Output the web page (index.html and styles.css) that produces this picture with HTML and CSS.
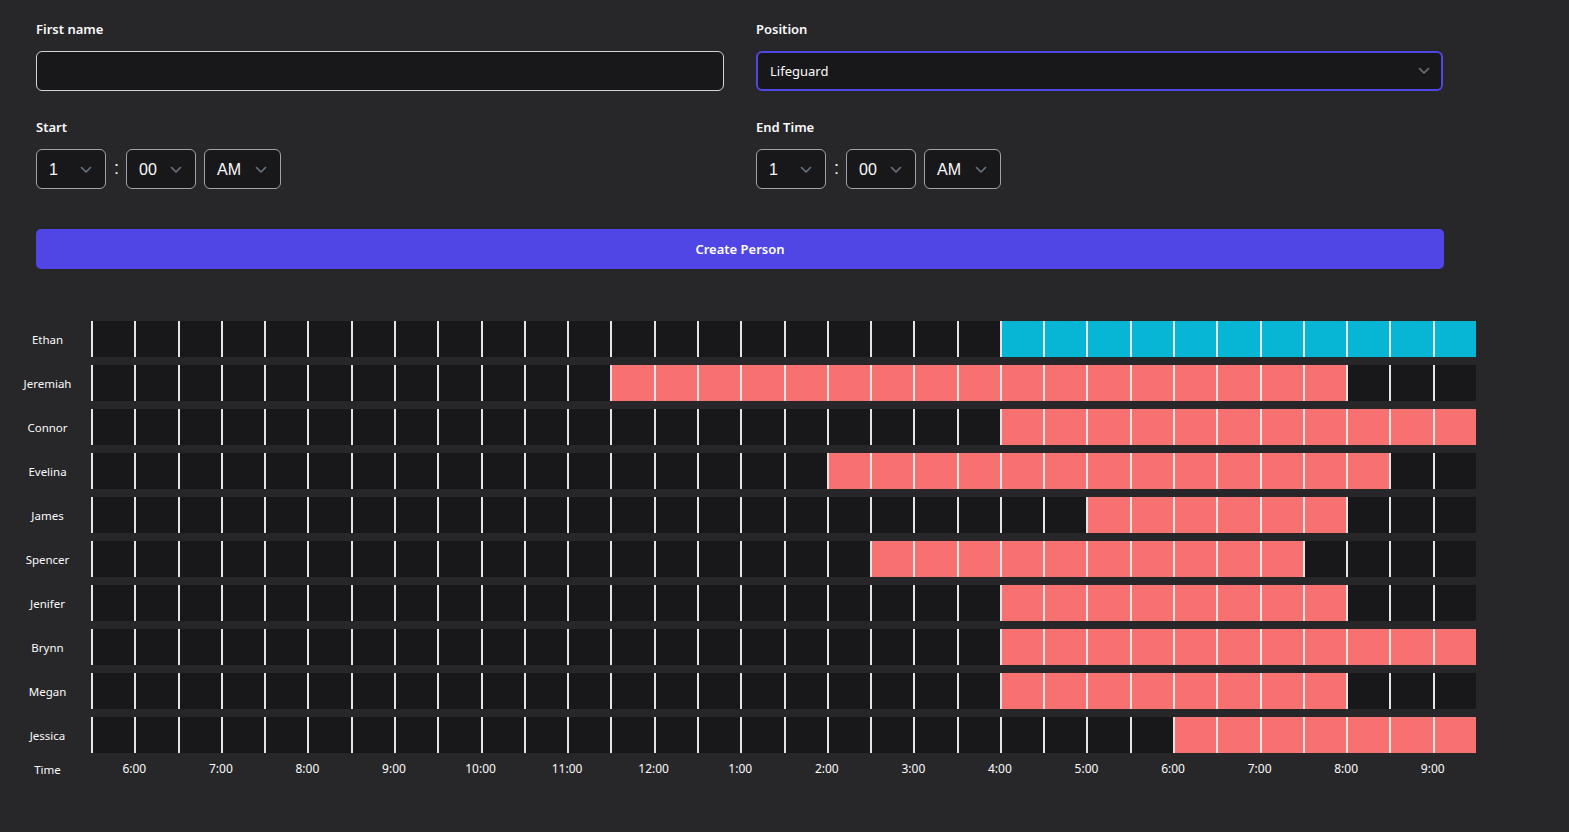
FILE: index.html
```html
<!DOCTYPE html>
<html lang="en">
<head>
<meta charset="utf-8">
<title>Schedule</title>
<link rel="stylesheet" href="styles.css">
</head>
<body>
<main class="page">
  <form class="form">
    <div class="form-grid">
      <div class="field">
        <label class="label">First name</label>
        <div class="input"></div>
      </div>
      <div class="field">
        <label class="label">Position</label>
        <div class="select select-focus">
          <span>Lifeguard</span>
          <svg class="chev" width="12" height="8" viewBox="0 0 12 8"><path d="M1.5 1.5 L6 6 L10.5 1.5" fill="none" stroke="#6b7280" stroke-width="1.6" stroke-linecap="round" stroke-linejoin="round"/></svg>
        </div>
      </div>
      <div class="field">
        <label class="label">Start</label>
        <div class="time">
          <div class="tsel w70"><span>1</span><svg class="chev" width="12" height="8" viewBox="0 0 12 8"><path d="M1.5 1.5 L6 6 L10.5 1.5" fill="none" stroke="#6b7280" stroke-width="1.6" stroke-linecap="round" stroke-linejoin="round"/></svg></div>
          <span class="colon">:</span>
          <div class="tsel w70"><span>00</span><svg class="chev" width="12" height="8" viewBox="0 0 12 8"><path d="M1.5 1.5 L6 6 L10.5 1.5" fill="none" stroke="#6b7280" stroke-width="1.6" stroke-linecap="round" stroke-linejoin="round"/></svg></div>
          <div class="tsel w77"><span>AM</span><svg class="chev" width="12" height="8" viewBox="0 0 12 8"><path d="M1.5 1.5 L6 6 L10.5 1.5" fill="none" stroke="#6b7280" stroke-width="1.6" stroke-linecap="round" stroke-linejoin="round"/></svg></div>
        </div>
      </div>
      <div class="field">
        <label class="label">End Time</label>
        <div class="time">
          <div class="tsel w70"><span>1</span><svg class="chev" width="12" height="8" viewBox="0 0 12 8"><path d="M1.5 1.5 L6 6 L10.5 1.5" fill="none" stroke="#6b7280" stroke-width="1.6" stroke-linecap="round" stroke-linejoin="round"/></svg></div>
          <span class="colon">:</span>
          <div class="tsel w70"><span>00</span><svg class="chev" width="12" height="8" viewBox="0 0 12 8"><path d="M1.5 1.5 L6 6 L10.5 1.5" fill="none" stroke="#6b7280" stroke-width="1.6" stroke-linecap="round" stroke-linejoin="round"/></svg></div>
          <div class="tsel w77"><span>AM</span><svg class="chev" width="12" height="8" viewBox="0 0 12 8"><path d="M1.5 1.5 L6 6 L10.5 1.5" fill="none" stroke="#6b7280" stroke-width="1.6" stroke-linecap="round" stroke-linejoin="round"/></svg></div>
        </div>
      </div>
    </div>
    <button type="button" class="btn">Create Person</button>
  </form>

  <section class="schedule">
    <div class="row">
      <div class="name">Ethan</div>
      <span class="cell"></span><span class="cell"></span><span class="cell"></span><span class="cell"></span><span class="cell"></span><span class="cell"></span><span class="cell"></span><span class="cell"></span>
      <span class="cell"></span><span class="cell"></span><span class="cell"></span><span class="cell"></span><span class="cell"></span><span class="cell"></span><span class="cell"></span><span class="cell"></span>
      <span class="cell"></span><span class="cell"></span><span class="cell"></span><span class="cell"></span><span class="cell"></span><span class="cell blue"></span><span class="cell blue"></span><span class="cell blue"></span>
      <span class="cell blue"></span><span class="cell blue"></span><span class="cell blue"></span><span class="cell blue"></span><span class="cell blue"></span><span class="cell blue"></span><span class="cell blue"></span><span class="cell blue"></span>
    </div>
    <div class="row">
      <div class="name">Jeremiah</div>
      <span class="cell"></span><span class="cell"></span><span class="cell"></span><span class="cell"></span><span class="cell"></span><span class="cell"></span><span class="cell"></span><span class="cell"></span>
      <span class="cell"></span><span class="cell"></span><span class="cell"></span><span class="cell"></span><span class="cell red"></span><span class="cell red"></span><span class="cell red"></span><span class="cell red"></span>
      <span class="cell red"></span><span class="cell red"></span><span class="cell red"></span><span class="cell red"></span><span class="cell red"></span><span class="cell red"></span><span class="cell red"></span><span class="cell red"></span>
      <span class="cell red"></span><span class="cell red"></span><span class="cell red"></span><span class="cell red"></span><span class="cell red"></span><span class="cell"></span><span class="cell"></span><span class="cell"></span>
    </div>
    <div class="row">
      <div class="name">Connor</div>
      <span class="cell"></span><span class="cell"></span><span class="cell"></span><span class="cell"></span><span class="cell"></span><span class="cell"></span><span class="cell"></span><span class="cell"></span>
      <span class="cell"></span><span class="cell"></span><span class="cell"></span><span class="cell"></span><span class="cell"></span><span class="cell"></span><span class="cell"></span><span class="cell"></span>
      <span class="cell"></span><span class="cell"></span><span class="cell"></span><span class="cell"></span><span class="cell"></span><span class="cell red"></span><span class="cell red"></span><span class="cell red"></span>
      <span class="cell red"></span><span class="cell red"></span><span class="cell red"></span><span class="cell red"></span><span class="cell red"></span><span class="cell red"></span><span class="cell red"></span><span class="cell red"></span>
    </div>
    <div class="row">
      <div class="name">Evelina</div>
      <span class="cell"></span><span class="cell"></span><span class="cell"></span><span class="cell"></span><span class="cell"></span><span class="cell"></span><span class="cell"></span><span class="cell"></span>
      <span class="cell"></span><span class="cell"></span><span class="cell"></span><span class="cell"></span><span class="cell"></span><span class="cell"></span><span class="cell"></span><span class="cell"></span>
      <span class="cell"></span><span class="cell red"></span><span class="cell red"></span><span class="cell red"></span><span class="cell red"></span><span class="cell red"></span><span class="cell red"></span><span class="cell red"></span>
      <span class="cell red"></span><span class="cell red"></span><span class="cell red"></span><span class="cell red"></span><span class="cell red"></span><span class="cell red"></span><span class="cell"></span><span class="cell"></span>
    </div>
    <div class="row">
      <div class="name">James</div>
      <span class="cell"></span><span class="cell"></span><span class="cell"></span><span class="cell"></span><span class="cell"></span><span class="cell"></span><span class="cell"></span><span class="cell"></span>
      <span class="cell"></span><span class="cell"></span><span class="cell"></span><span class="cell"></span><span class="cell"></span><span class="cell"></span><span class="cell"></span><span class="cell"></span>
      <span class="cell"></span><span class="cell"></span><span class="cell"></span><span class="cell"></span><span class="cell"></span><span class="cell"></span><span class="cell"></span><span class="cell red"></span>
      <span class="cell red"></span><span class="cell red"></span><span class="cell red"></span><span class="cell red"></span><span class="cell red"></span><span class="cell"></span><span class="cell"></span><span class="cell"></span>
    </div>
    <div class="row">
      <div class="name">Spencer</div>
      <span class="cell"></span><span class="cell"></span><span class="cell"></span><span class="cell"></span><span class="cell"></span><span class="cell"></span><span class="cell"></span><span class="cell"></span>
      <span class="cell"></span><span class="cell"></span><span class="cell"></span><span class="cell"></span><span class="cell"></span><span class="cell"></span><span class="cell"></span><span class="cell"></span>
      <span class="cell"></span><span class="cell"></span><span class="cell red"></span><span class="cell red"></span><span class="cell red"></span><span class="cell red"></span><span class="cell red"></span><span class="cell red"></span>
      <span class="cell red"></span><span class="cell red"></span><span class="cell red"></span><span class="cell red"></span><span class="cell"></span><span class="cell"></span><span class="cell"></span><span class="cell"></span>
    </div>
    <div class="row">
      <div class="name">Jenifer</div>
      <span class="cell"></span><span class="cell"></span><span class="cell"></span><span class="cell"></span><span class="cell"></span><span class="cell"></span><span class="cell"></span><span class="cell"></span>
      <span class="cell"></span><span class="cell"></span><span class="cell"></span><span class="cell"></span><span class="cell"></span><span class="cell"></span><span class="cell"></span><span class="cell"></span>
      <span class="cell"></span><span class="cell"></span><span class="cell"></span><span class="cell"></span><span class="cell"></span><span class="cell red"></span><span class="cell red"></span><span class="cell red"></span>
      <span class="cell red"></span><span class="cell red"></span><span class="cell red"></span><span class="cell red"></span><span class="cell red"></span><span class="cell"></span><span class="cell"></span><span class="cell"></span>
    </div>
    <div class="row">
      <div class="name">Brynn</div>
      <span class="cell"></span><span class="cell"></span><span class="cell"></span><span class="cell"></span><span class="cell"></span><span class="cell"></span><span class="cell"></span><span class="cell"></span>
      <span class="cell"></span><span class="cell"></span><span class="cell"></span><span class="cell"></span><span class="cell"></span><span class="cell"></span><span class="cell"></span><span class="cell"></span>
      <span class="cell"></span><span class="cell"></span><span class="cell"></span><span class="cell"></span><span class="cell"></span><span class="cell red"></span><span class="cell red"></span><span class="cell red"></span>
      <span class="cell red"></span><span class="cell red"></span><span class="cell red"></span><span class="cell red"></span><span class="cell red"></span><span class="cell red"></span><span class="cell red"></span><span class="cell red"></span>
    </div>
    <div class="row">
      <div class="name">Megan</div>
      <span class="cell"></span><span class="cell"></span><span class="cell"></span><span class="cell"></span><span class="cell"></span><span class="cell"></span><span class="cell"></span><span class="cell"></span>
      <span class="cell"></span><span class="cell"></span><span class="cell"></span><span class="cell"></span><span class="cell"></span><span class="cell"></span><span class="cell"></span><span class="cell"></span>
      <span class="cell"></span><span class="cell"></span><span class="cell"></span><span class="cell"></span><span class="cell"></span><span class="cell red"></span><span class="cell red"></span><span class="cell red"></span>
      <span class="cell red"></span><span class="cell red"></span><span class="cell red"></span><span class="cell red"></span><span class="cell red"></span><span class="cell"></span><span class="cell"></span><span class="cell"></span>
    </div>
    <div class="row">
      <div class="name">Jessica</div>
      <span class="cell"></span><span class="cell"></span><span class="cell"></span><span class="cell"></span><span class="cell"></span><span class="cell"></span><span class="cell"></span><span class="cell"></span>
      <span class="cell"></span><span class="cell"></span><span class="cell"></span><span class="cell"></span><span class="cell"></span><span class="cell"></span><span class="cell"></span><span class="cell"></span>
      <span class="cell"></span><span class="cell"></span><span class="cell"></span><span class="cell"></span><span class="cell"></span><span class="cell"></span><span class="cell"></span><span class="cell"></span>
      <span class="cell"></span><span class="cell red"></span><span class="cell red"></span><span class="cell red"></span><span class="cell red"></span><span class="cell red"></span><span class="cell red"></span><span class="cell red"></span>
    </div>
    <div class="row time-row">
      <div class="name">Time</div>
      <span class="tick">6:00</span><span class="tick">7:00</span><span class="tick">8:00</span><span class="tick">9:00</span>
      <span class="tick">10:00</span><span class="tick">11:00</span><span class="tick">12:00</span><span class="tick">1:00</span>
      <span class="tick">2:00</span><span class="tick">3:00</span><span class="tick">4:00</span><span class="tick">5:00</span>
      <span class="tick">6:00</span><span class="tick">7:00</span><span class="tick">8:00</span><span class="tick">9:00</span>
    </div>
  </section>
</main>
</body>
</html>
```

FILE: styles.css
```css
* { box-sizing: border-box; }

html, body {
  margin: 0;
  background: #27272a;
  color: #fafafa;
  font-family: "Noto Sans", "Open Sans", sans-serif;
}

.page {
  width: 1569px;
  padding-top: 19px;
}

.form {
  width: 1408px;
  margin-left: 36px;
}

.form-grid {
  display: grid;
  grid-template-columns: 688px 687px;
  column-gap: 32px;
  row-gap: 26px;
}

.field {
  display: flex;
  flex-direction: column;
  gap: 12px;
}

.label {
  font-size: 13px;
  font-weight: 600;
  line-height: 20px;
  color: #fafafa;
}

.input {
  height: 40px;
  background: #18181b;
  border: 1px solid #d4d4d8;
  border-radius: 6px;
}

.select {
  height: 40px;
  background: #18181b;
  border-radius: 6px;
  display: flex;
  align-items: center;
  justify-content: space-between;
  padding: 0 11px 0 12px;
  font-size: 13px;
  color: #fafafa;
}

.select-focus {
  border: 2px solid #4f46e5;
}

.time {
  display: flex;
  align-items: center;
  gap: 8px;
  height: 40px;
}

.tsel {
  height: 40px;
  background: #18181b;
  border: 1px solid #a1a1aa;
  border-radius: 6px;
  display: flex;
  align-items: center;
  justify-content: space-between;
  padding: 1px 13px 0 12px;
  font-family: "Liberation Sans", Arial, sans-serif;
  font-size: 16px;
  color: #fafafa;
}

.w70 { width: 70px; }
.w77 { width: 77px; }

.colon {
  font-family: "Liberation Sans", Arial, sans-serif;
  font-size: 18px;
  width: 4px;
  text-align: center;
  padding-bottom: 2px;
}

.chev { display: block; }

.btn {
  display: block;
  width: 1408px;
  height: 40px;
  margin-top: 40px;
  border: 0;
  border-radius: 5px;
  background: #4f46e5;
  color: #ffffff;
  font-family: inherit;
  font-size: 13px;
  font-weight: 600;
}

.schedule {
  width: 1476px;
  margin-top: 52px;
  display: flex;
  flex-direction: column;
  gap: 8px;
}

.row {
  display: grid;
  grid-template-columns: 91px repeat(32, 1fr);
  height: 36px;
}

.name {
  display: flex;
  align-items: center;
  justify-content: center;
  font-size: 11.5px;
  color: #fafafa;
  padding-left: 4px;
}

.cell {
  background: #18181b;
  border-left: 2px solid #e4e4e7;
}

.cell.red { background: #f87171; }
.cell.blue { background: #06b6d4; }

.time-row {
  height: 16px;
}

.tick {
  grid-column: span 2;
  text-align: center;
  font-size: 12px;
  line-height: 16px;
  color: #fafafa;
}
```
